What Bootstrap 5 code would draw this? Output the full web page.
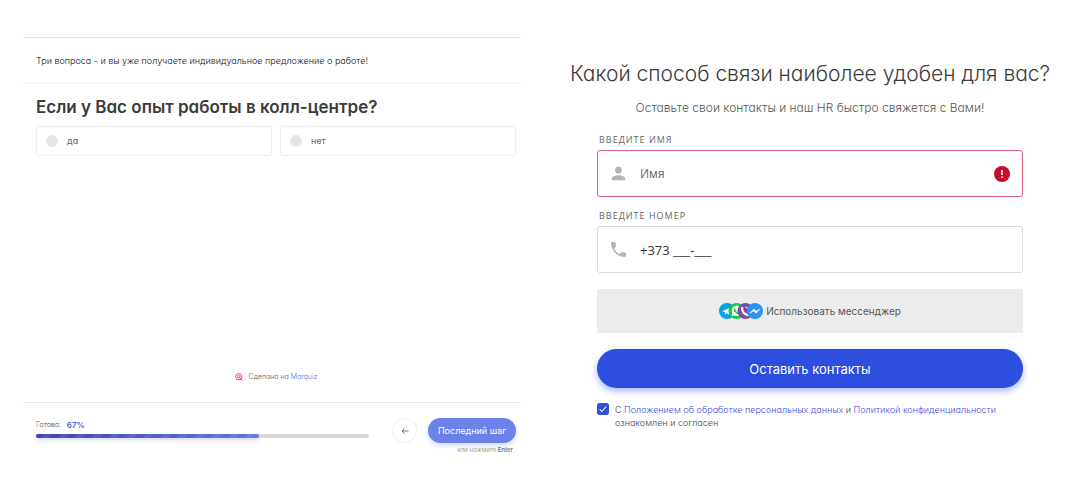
<!DOCTYPE html>
<html lang="ru">
<head>
<meta charset="utf-8">
<meta name="viewport" content="width=device-width, initial-scale=1">
<title>Опрос</title>
<link href="https://cdn.jsdelivr.net/npm/bootstrap@5.3.0/dist/css/bootstrap.min.css" rel="stylesheet">
<style>
  body { font-family: Inter, "Open Sans", sans-serif; font-feature-settings: "cv11"; color: #3b3b3b; font-size: 9px; line-height: 16px; }
  a { text-decoration: none; color: #5a6ee6; }
  .split { min-height: 100vh; }
  .quiz { padding: 37px 18px 0 23px; }
  .quiz-head { border-top: 1px solid #dfdfdf; border-bottom: 1px solid #efefef; padding: 15px 13px 14px; font-weight: 300; color: #111; }
  .quiz-body { padding: 10px 5px 16px 13px; }
  .quiz-title { font-size: 17px; line-height: 26px; font-weight: 600; margin-bottom: 6px; }
  .option { border: 1px solid #ededed; border-radius: 3px; height: 30px; padding: 0 9px; gap: 9px; color: #666; font-size: 9px; }
  .option input { appearance: none; width: 12px; height: 12px; border-radius: 50%; background: #e4e4e4; margin: 0; }
  .made { font-size: 7px; font-weight: 300; line-height: 18px; color: #666; gap: 6px; }
  .quiz-foot { border-top: 1px solid #e8e8e8; padding: 15px 5px 0 13px; height: 93px; }
  .ready { font-size: 7px; font-weight: 300; line-height: 14px; color: #555; gap: 6px; }
  .ready strong { font-size: 8px; font-weight: 600; color: #4a5ee0; }
  .meter { height: 4px; border-radius: 2px; background: #d9d9d9; margin-top: 2px; overflow: visible; }
  .meter .progress-bar { border-radius: 2px; box-shadow: 0 2px 4px #cdd5fa; background: repeating-linear-gradient(135deg, transparent 0 6px, #ffffff14 6px 12px), linear-gradient(90deg, #3a49a9, #6577dc); }
  .back { width: 25px; height: 25px; border: 1px solid #eee; border-radius: 50%; background: #fff; margin: 0 11px 0 23px; }
  .next { width: 88px; height: 25px; border: 0; border-radius: 13px; background: #6b82e8; color: #fff; font-size: 9px; line-height: 25px; box-shadow: 0 2px 5px #cbd3fa; }
  .hint { font-size: 6px; line-height: 14px; color: #999; padding-right: 3px; }
  .hint strong { font-weight: 600; color: #777; }
  .lead-form { padding: 61px 28px 0 31px; }
  .form-title { font-size: 21px; line-height: 26px; font-weight: 300; margin: 0 -27px 12px; }
  .sub { font-size: 12px; font-weight: 300; line-height: 18px; color: #555; margin-bottom: 16px; }
  .fields { padding: 0 27px; }
  .caption { font-family: "Open Sans", sans-serif; font-size: 9px; font-weight: 500; line-height: 14px; letter-spacing: 1px; color: #666; padding-left: 2px; margin-bottom: 3px; text-transform: uppercase; }
  .field { height: 47px; border: 1px solid #dcdcdc; border-radius: 3px; padding: 0 12px 0 13px; gap: 14px; margin-bottom: 12px; }
  .field.bad { border-color: #dc5f7c; }
  .field input { border: 0; outline: 0; padding: 0; background: none; font-family: "Open Sans", sans-serif; font-size: 12px; color: #333; }
  .field input[type="tel"] { font-size: 13px; }
  .field input::placeholder { color: #666; opacity: 1; }
  .messenger { height: 44px; border: 0; background: #ececec; color: #555; font-size: 10px; gap: 3px; margin: 16px 0; }
  .send { height: 39px; border: 0; border-radius: 20px; background: #2d4fe0; color: #fff; font-size: 13px; box-shadow: 0 3px 7px #a9b7f5; margin-bottom: 15px; }
  .agree { gap: 6px; font-size: 9px; font-weight: 300; line-height: 13px; color: #444; }
  .agree a { color: #3a50e0; }
  .agree input { width: 12px; height: 12px; margin: 0; border-radius: 3px; }
  .agree input:checked { background-color: #2d4fe0; border-color: #2d4fe0; background-image: url("data:image/svg+xml,%3csvg xmlns='http://www.w3.org/2000/svg' viewBox='0 0 12 12'%3e%3cpath fill='none' stroke='%23fff' stroke-width='1.3' d='M2 6.500l2.500 2.500L10 3'/%3e%3c/svg%3e"); }
</style>
</head>
<body>
<div class="container-fluid p-0 pe-2">
  <div class="row g-0 split">
    <section class="col-6 d-flex flex-column quiz">
      <header class="quiz-head"><p class="mb-0">Три вопроса - и вы уже получаете индивидуальное предложение о работе!</p></header>
      <div class="quiz-body flex-grow-1 d-flex flex-column">
        <h2 class="quiz-title">Если у Вас опыт работы в колл-центре?</h2>
        <div class="row row-cols-2 gx-2">
          <div class="col"><label class="option d-flex align-items-center"><input type="radio" name="exp">да</label></div>
          <div class="col"><label class="option d-flex align-items-center"><input type="radio" name="exp">нет</label></div>
        </div>
        <div class="made mt-auto d-flex justify-content-center align-items-center">
          <svg width="8" height="8" viewBox="0 0 16 16" fill="none" stroke="#e33f9b" stroke-width="2"><circle cx="7.500" cy="7.500" r="6.300"/><circle cx="7.500" cy="7.500" r="2.500"/><path d="M9 9l6 6"/></svg>
          <span>Сделано на <a href="#">Marquiz</a></span>
        </div>
      </div>
      <footer class="quiz-foot d-flex align-items-start">
        <div class="flex-grow-1">
          <div class="ready d-flex align-items-center">Готово: <strong>67%</strong></div>
          <div class="progress meter"><div class="progress-bar" style="width:67%"></div></div>
        </div>
        <button class="back d-flex align-items-center justify-content-center p-0" type="button" aria-label="Назад"><svg width="8" height="8" viewBox="0 0 8 8" fill="none" stroke="#777"><path d="M7.500 4H1M3.500 1.500L1 4l2.500 2.500"/></svg></button>
        <div class="text-end">
          <button class="next p-0" type="button">Последний шаг</button>
          <div class="hint">или нажмите <strong>Enter</strong></div>
        </div>
      </footer>
    </section>
    <section class="col-6 lead-form">
      <h1 class="form-title text-center">Какой способ связи наиболее удобен для вас?</h1>
      <p class="sub text-center">Оставьте свои контакты и наш HR быстро свяжется с Вами!</p>
      <form class="fields">
        <label class="caption d-block" for="name">Введите имя</label>
        <div class="field bad d-flex align-items-center">
          <svg width="15" height="15" viewBox="3 4 18 16" fill="#b3b3b3"><circle cx="12" cy="8" r="4"/><path d="M12 14c-2.670 0-8 1.340-8 4v2h16v-2c0-2.660-5.330-4-8-4z"/></svg>
          <input class="flex-grow-1" id="name" type="text" placeholder="Имя">
          <svg width="16" height="16" viewBox="0 0 16 16"><circle cx="8" cy="8" r="8" fill="#d00a2f"/><path d="M8 4v5M8 10.200v1.800" stroke="#fff" stroke-width="1.600"/></svg>
        </div>
        <label class="caption d-block" for="phone">Введите номер</label>
        <div class="field d-flex align-items-center">
          <svg width="15" height="15" viewBox="3 3 18 18" fill="#b3b3b3"><path d="M6.620 10.790c1.440 2.830 3.760 5.140 6.590 6.590l2.200-2.200c.27-.27.670-.36 1.020-.24 1.120.37 2.330.57 3.570.57.550 0 1 .450 1 1V20c0 .550-.450 1-1 1-9.390 0-17-7.610-17-17 0-.550.450-1 1-1h3.500c.550 0 1 .450 1 1 0 1.250.2 2.450.57 3.570.110.350.030.740-.250 1.020l-2.200 2.200z"/></svg>
          <input class="flex-grow-1" id="phone" type="tel" value="+373 ___-___">
        </div>
        <button class="messenger w-100 d-flex align-items-center justify-content-center" type="button">
          <svg width="44" height="16" viewBox="0 0 44 16"><circle cx="8" cy="8" r="8" fill="#0aa0e6"/><path d="M3 8.200L12 4.500 10.500 12 7.500 10 6 11.500 5.800 9z" fill="#fff"/><circle cx="17.500" cy="8" r="8" fill="#0ccb45"/><path d="M12.500 13l.8-2.500a5.200 5.200 0 1 1 2 1.900z" fill="#fff"/><path d="M15.500 5.500q0 4 4.500 5" stroke="#0ccb45" stroke-width="1.500" fill="none"/><circle cx="26.500" cy="8" r="8" fill="#7b4ba6"/><path d="M23 4q-.5 6.500 6.500 8.500" stroke="#fff" stroke-width="2.200" fill="none"/><path d="M26.500 4q3.500.5 3.500 4" stroke="#fff" fill="none"/><circle cx="36" cy="8" r="8" fill="#2a93f5"/><path d="M31 10l3.800-4 2.400 2.200L41 6l-3.900 4.200-2.400-2.300z" fill="#fff" stroke="#fff" stroke-width=".6"/></svg>
          Использовать мессенджер
        </button>
        <button class="send w-100 d-block" type="button">Оставить контакты</button>
        <div class="agree d-flex align-items-start">
          <input class="form-check-input flex-shrink-0" type="checkbox" id="agree" checked>
          <label for="agree">С <a href="#">Положением об обработке персональных данных</a> и <a href="#">Политикой конфиденциальности</a> ознакомлен и согласен</label>
        </div>
      </form>
    </section>
  </div>
</div>
<script src="https://cdn.jsdelivr.net/npm/bootstrap@5.3.0/dist/js/bootstrap.bundle.min.js"></script>
</body>
</html>
